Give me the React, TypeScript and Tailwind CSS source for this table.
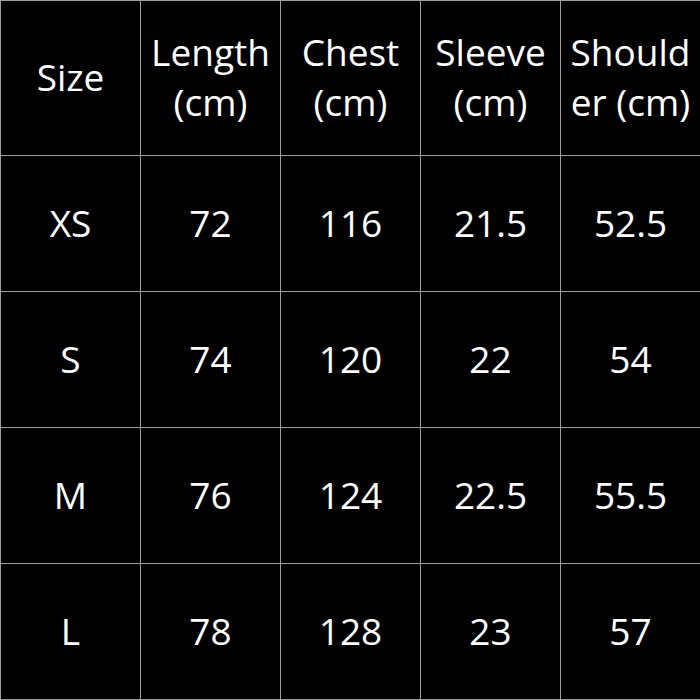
export default function App() {
  const header = [["Size"], ["Length", "(cm)"], ["Chest", "(cm)"], ["Sleeve", "(cm)"], ["Should", "er (cm)"]];
  const rows = [
    ["XS", "72", "116", "21.5", "52.5"],
    ["S", "74", "120", "22", "54"],
    ["M", "76", "124", "22.5", "55.5"],
    ["L", "78", "128", "23", "57"],
  ];

  return (
    <div
      className="w-[700px] h-[700px] bg-black overflow-hidden"
      style={{ fontFamily: '"Open Sans", sans-serif' }}
    >
      <div className="grid grid-cols-[repeat(5,139px)] grid-rows-[154px_repeat(4,135px)] gap-px p-px bg-[#9c9c9c] w-[701px]">
        {header.map((h) => (
          <div
            key={h[0]}
            className="bg-black text-white flex flex-col items-center justify-center text-center text-[37px] leading-[50px] whitespace-nowrap pb-[3px]"
          >
            {h.map((line) => (
              <span key={line}>{line}</span>
            ))}
          </div>
        ))}
        {rows.flatMap((r, i) =>
          r.map((c, j) => (
            <div
              key={`${i}-${j}`}
              className="bg-black text-white flex items-center justify-center text-[37px] pb-[2px]"
            >
              {c}
            </div>
          ))
        )}
      </div>
    </div>
  );
}
